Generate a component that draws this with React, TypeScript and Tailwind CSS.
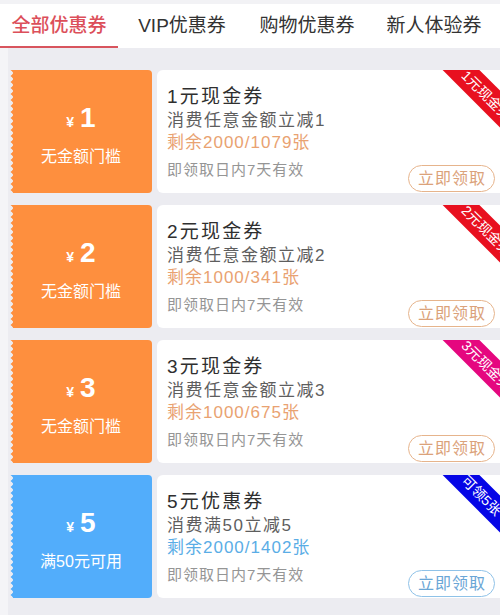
import React from 'react';

interface Coupon {
  amount: string;
  cond: string;
  title: string;
  desc: string;
  remain: string;
  ribbon: string;
  ribbonBg: string;
  theme: 'orange' | 'blue';
}

const coupons: Coupon[] = [
  { amount: '1', cond: '无金额门槛', title: '1元现金券', desc: '消费任意金额立减1', remain: '剩余2000/1079张', ribbon: '1元现金券', ribbonBg: 'bg-[#e8101f]', theme: 'orange' },
  { amount: '2', cond: '无金额门槛', title: '2元现金券', desc: '消费任意金额立减2', remain: '剩余1000/341张', ribbon: '2元现金券', ribbonBg: 'bg-[#e8101f]', theme: 'orange' },
  { amount: '3', cond: '无金额门槛', title: '3元现金券', desc: '消费任意金额立减3', remain: '剩余1000/675张', ribbon: '3元现金券', ribbonBg: 'bg-[#e5077f]', theme: 'orange' },
  { amount: '5', cond: '满50元可用', title: '5元优惠券', desc: '消费满50立减5', remain: '剩余2000/1402张', ribbon: '可领5张', ribbonBg: 'bg-[#0505e6]', theme: 'blue' },
];

const themes = {
  orange: {
    panel: 'bg-[#fe8f3e]',
    scallop: 'bg-[radial-gradient(circle_at_0_50%,#ececf1_2.5px,#fe8f3e_3px)]',
    remain: 'text-[#e9a271]',
    button: 'border-[#e6b48c] text-[#dba27a]',
  },
  blue: {
    panel: 'bg-[#52adfb]',
    scallop: 'bg-[radial-gradient(circle_at_0_50%,#ececf1_2.5px,#52adfb_3px)]',
    remain: 'text-[#5aade6]',
    button: 'border-[#8fc2e8] text-[#6aa6d6]',
  },
};

const tabs = [
  { label: '全部优惠券', w: 'w-[118px]' },
  { label: 'VIP优惠券', w: 'w-[128px]' },
  { label: '购物优惠券', w: 'w-[122px]' },
  { label: '新人体验券', w: 'w-[132px]' },
];

function CouponCard({ c }: { c: Coupon }) {
  const t = themes[c.theme];
  return (
    <div className="flex h-[123px] gap-[5px]">
      <div className={`flex w-[142px] rounded-r-[4px] ${t.panel}`}>
        <div className={`w-[4px] bg-[length:4px_6px] bg-repeat-y ${t.scallop}`} />
        <div className="flex flex-1 flex-col items-center justify-center pt-[6px] pr-[4px] text-white">
          <div className="flex items-baseline leading-[32px]">
            <span className="mr-[6px] text-[14px] font-bold">¥</span>
            <span className="text-[28px] font-bold">{c.amount}</span>
          </div>
          <div className="mt-[9px] text-[16px] leading-[20px]">{c.cond}</div>
        </div>
      </div>
      <div className="relative flex flex-1 flex-col overflow-hidden rounded-l-[6px] bg-white pl-[10px] pt-[14px]">
        <div className="text-[19px] leading-[26px] tracking-[2.2px] text-[#2f2f2f]">{c.title}</div>
        <div className="text-[17px] leading-[22px] tracking-[1.5px] text-[#5e5e5e]">{c.desc}</div>
        <div className={`text-[17px] leading-[22px] tracking-[1px] ${t.remain}`}>{c.remain}</div>
        <div className="flex items-start justify-between pr-[5px]">
          <div className="mt-[6px] text-[15px] leading-[20px] tracking-[1px] text-[#959595]">即领取日内7天有效</div>
          <button className={`mt-[11px] h-[27px] w-[87px] rounded-full border pl-[1px] text-[16px] leading-[25px] tracking-[1px] ${t.button}`}>
            立即领取
          </button>
        </div>
        <div
          className={`absolute right-[-41px] top-[7px] h-[26px] w-[120px] rotate-45 whitespace-nowrap pl-[36px] text-[14px] leading-[26px] text-white ${c.ribbonBg}`}
        >
          {c.ribbon}
        </div>
      </div>
    </div>
  );
}

export default function App() {
  return (
    <div className="h-[615px] w-[500px] overflow-hidden bg-[#f4f4f7] font-['Liberation_Sans','Noto_Sans_CJK_SC',sans-serif]">
      <div className="h-[4px] bg-[#f2f2f5]" />
      <div className="flex h-[44px] bg-white">
        {tabs.map((tab, i) => (
          <div
            key={tab.label}
            className={`flex ${tab.w} items-center justify-center border-b-2 pt-[2px] text-[19px] ${
              i === 0 ? 'border-[#d8555e] font-medium text-[#dc4f5a]' : 'border-transparent text-[#333333]'
            }`}
          >
            {tab.label}
          </div>
        ))}
      </div>
      <div className="ml-[8px] flex h-full flex-col gap-[12px] bg-[#ececf1] pl-[2px] pt-[22px]">
        {coupons.map((c) => (
          <CouponCard key={c.title} c={c} />
        ))}
      </div>
    </div>
  );
}
